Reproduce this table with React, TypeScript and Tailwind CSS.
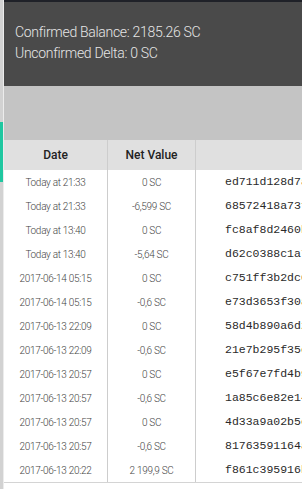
import React from 'react';

type Tx = { date: string; value: string; id: string };

const rows: Tx[] = [
  { date: 'Today at 21:33', value: '0 SC', id: 'ed711d128d7a4c19' },
  { date: 'Today at 21:33', value: '-6,599 SC', id: '68572418a73f0e21' },
  { date: 'Today at 13:40', value: '0 SC', id: 'fc8af8d2460b91ce' },
  { date: 'Today at 13:40', value: '-5,64 SC', id: 'd62c0388c1a7e350' },
  { date: '2017-06-14 05:15', value: '0 SC', id: 'c751ff3b2dc08e44' },
  { date: '2017-06-14 05:15', value: '-0,6 SC', id: 'e73d3653f30a1b92' },
  { date: '2017-06-13 22:09', value: '0 SC', id: '58d4b890a6d2c7f1' },
  { date: '2017-06-13 22:09', value: '-0,6 SC', id: '21e7b295f35e0d68' },
  { date: '2017-06-13 20:57', value: '0 SC', id: 'e5f67e7fd4b93a10' },
  { date: '2017-06-13 20:57', value: '-0,6 SC', id: '1a85c6e82e14f7b3' },
  { date: '2017-06-13 20:57', value: '0 SC', id: '4d33a9a02b5c86e0' },
  { date: '2017-06-13 20:57', value: '-0,6 SC', id: '81763591164ad2f9' },
  { date: '2017-06-13 20:22', value: '2 199,9 SC', id: 'f861c395916b0e47' },
];

const App: React.FC = () => {
  return (
    <div className="flex w-[302px] h-[489px] overflow-hidden bg-white font-['Roboto',sans-serif]">
      {/* side rail */}
      <div className="w-[4px] shrink-0 flex flex-col bg-[#d2d2d2] border-r border-[#ececec]">
        <div className="h-[122px]" />
        <div className="h-[60px] bg-[#1fc7a0]" />
      </div>

      <div className="flex-1 min-w-0 flex flex-col">
        <div className="h-[2px] bg-[#1f2128]" />
        <div className="h-[84px] bg-[#4a4a4a] pl-[11px] pt-[20px] text-[14px] leading-[21px] text-[#e6e6e6] font-light tracking-[-0.3px]">
          <div>Confirmed Balance: 2185.26 SC</div>
          <div>Unconfirmed Delta: 0 SC</div>
        </div>
        <div className="h-[54px] bg-[#c4c4c4]" />

        <div className="flex flex-col border-b border-[#d4d4d4] w-[400px]">
          <div className="flex h-[30px] bg-[#e0e0e0] text-[12px] font-medium text-[#222]">
            <div className="w-[104px] flex items-center justify-center border-r border-[#cdcdcd]">Date</div>
            <div className="w-[88px] flex items-center justify-center border-r border-[#cdcdcd]">Net Value</div>
            <div className="flex-1" />
          </div>
          {rows.map((r, i) => (
            <div key={i} className="flex h-[24px] text-[10px] font-light text-[#444] tracking-[-0.3px]">
              <div className="w-[104px] flex items-center justify-center border-r border-[#cdcdcd]">{r.date}</div>
              <div className="w-[88px] flex items-center justify-center border-r border-[#cdcdcd]">{r.value}</div>
              <div className="flex-1 flex items-center pl-[29px] font-['Liberation_Mono',monospace] font-normal tracking-normal text-[11.5px] text-[#2a2a2a] whitespace-nowrap">
                {r.id}
              </div>
            </div>
          ))}
        </div>
      </div>
    </div>
  );
};

export default App;
